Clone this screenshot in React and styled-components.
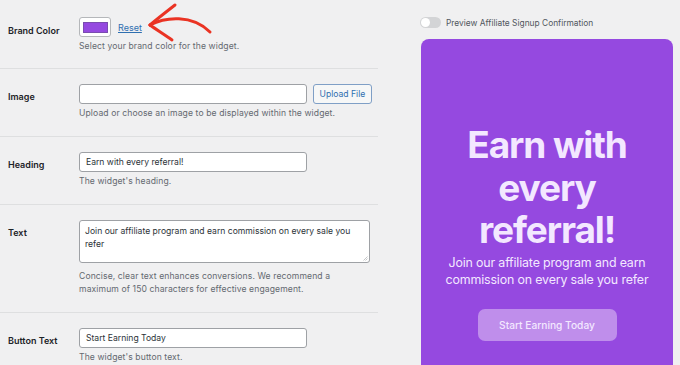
import React from 'react';
import styled, { createGlobalStyle } from 'styled-components';

const Global = createGlobalStyle`
  html, body { margin: 0; padding: 0; background: #f0f0f1; }
  body { font-family: Inter, "Noto Sans", sans-serif; color: #1d2327; }
  * { box-sizing: border-box; }
`;

const Page = styled.div`
  position: relative;
  display: flex;
  width: 680px;
  height: 365px;
  overflow: hidden;
`;

const Settings = styled.div`
  width: 378px;
  flex: none;
`;

const Row = styled.div`
  display: flex;
  padding-top: ${p => (p.first ? 17 : 15)}px;
  padding-bottom: ${p => (p.pb === undefined ? 17 : p.pb)}px;
  border-bottom: ${p => (p.last ? 'none' : '1px solid #dedfe0')};
`;

const Label = styled.div`
  width: 79px;
  flex: none;
  padding: ${p => p.top || 8}px 0 0 8px;
  font-size: 9px;
  line-height: 10px;
  font-weight: 600;
  color: #1d2327;
`;

const Field = styled.div`
  display: flex;
  flex-direction: column;
  min-width: 0;
`;

const Line = styled.div`
  display: flex;
  align-items: center;
  gap: ${p => p.gap || 6}px;
`;

const Swatch = styled.div`
  width: 32px;
  height: 20px;
  border: 1px solid #b5b7ba;
  border-radius: 3px;
  background: #fff;
  display: flex;
  align-items: center;
  justify-content: center;
`;

const SwatchFill = styled.div`
  width: 25px;
  height: 11px;
  background: #9549e0;
  border: 1px solid #7a4cb0;
`;

const Reset = styled.a`
  font-size: 9px;
  color: #2f6fb0;
  text-decoration: underline;
  margin-left: 1px;
`;

const Desc = styled.div`
  margin-top: ${p => p.gap || 4}px;
  font-size: 8.6px;
  line-height: ${p => p.lh || 11}px;
  color: #646970;
  letter-spacing: 0.1px;
`;

const Input = styled.div`
  width: ${p => p.w || 228}px;
  height: ${p => p.h || 20}px;
  border: 1px solid #9ea1a5;
  border-radius: 3px;
  background: #fff;
  font-size: 8.6px;
  color: #2c3338;
  padding: ${p => (p.area ? '4px 5px' : '0 6px')};
  display: flex;
  align-items: ${p => (p.area ? 'flex-start' : 'center')};
  line-height: 13px;
  position: relative;
`;

const Grip = styled.svg`
  position: absolute;
  right: 1px;
  bottom: 1px;
`;

const UploadButton = styled.div`
  height: 20px;
  padding: 0 5.5px;
  border: 1px solid #7f9fc6;
  border-radius: 3px;
  background: #f6f7f7;
  color: #2f6fb0;
  font-size: 8.6px;
  display: flex;
  align-items: center;
`;

const Preview = styled.div`
  margin-left: 42px;
  padding-top: 17px;
  width: 253px;
  flex: none;
`;

const ToggleRow = styled.div`
  display: flex;
  align-items: center;
  gap: 5px;
  height: 11px;
  font-size: 8.4px;
  color: #50575e;
`;

const Toggle = styled.div`
  width: 21px;
  height: 11px;
  border-radius: 6px;
  background: #d3d4d6;
  padding: 1px;
  display: flex;
`;

const Knob = styled.div`
  width: 9px;
  height: 9px;
  border-radius: 50%;
  background: #fff;
`;

const Card = styled.div`
  margin-top: 11px;
  margin-left: 1px;
  width: 252px;
  height: 340px;
  border-radius: 8px;
  background: #9549e0;
  display: flex;
  flex-direction: column;
  align-items: center;
  padding-top: 85px;
  color: #f3e8ff;
  text-align: center;
`;

const Heading = styled.div`
  font-size: 37px;
  font-weight: 700;
  line-height: 42.5px;
  letter-spacing: -1.1px;
  width: 200px;
`;

const Text = styled.div`
  margin-top: 2px;
  font-size: 12.4px;
  line-height: 17.5px;
  letter-spacing: -0.15px;
  width: 230px;
`;

const CTA = styled.div`
  margin-top: 20px;
  width: 139px;
  height: 32px;
  border-radius: 7px;
  background: #bf8eeb;
  font-size: 10.2px;
  font-weight: 500;
  display: flex;
  align-items: center;
  justify-content: center;
`;

const Arrow = styled.svg`
  position: absolute;
  left: 0;
  top: 0;
  pointer-events: none;
`;

export default function App() {
  return (
    <Page>
      <Global />
      <Settings>
        <Row first pb={16}>
          <Label top={9}>Brand Color</Label>
          <Field>
            <Line>
              <Swatch><SwatchFill /></Swatch>
              <Reset>Reset</Reset>
            </Line>
            <Desc>Select your brand color for the widget.</Desc>
          </Field>
        </Row>
        <Row>
          <Label>Image</Label>
          <Field>
            <Line>
              <Input />
              <UploadButton>Upload File</UploadButton>
            </Line>
            <Desc>Upload or choose an image to be displayed within the widget.</Desc>
          </Field>
        </Row>
        <Row>
          <Label>Heading</Label>
          <Field>
            <Input>Earn with every referral!</Input>
            <Desc>The widget's heading.</Desc>
          </Field>
        </Row>
        <Row pb={16}>
          <Label>Text</Label>
          <Field>
            <Input area w={291} h={43}>
              Join our affiliate program and earn commission on every sale you refer
              <Grip width="5" height="5" viewBox="0 0 5 5">
                <path d="M4.5 0.5 L0.5 4.5 M4.5 2.5 L2.5 4.5" stroke="#9ea1a5" strokeWidth="0.6" />
              </Grip>
            </Input>
            <Desc gap={7} lh={13}>
              Concise, clear text enhances conversions. We recommend a<br />
              maximum of 150 characters for effective engagement.
            </Desc>
          </Field>
        </Row>
        <Row last pb={0}>
          <Label>Button Text</Label>
          <Field>
            <Input>Start Earning Today</Input>
            <Desc>The widget's button text.</Desc>
          </Field>
        </Row>
      </Settings>
      <Preview>
        <ToggleRow>
          <Toggle><Knob /></Toggle>
          Preview Affiliate Signup Confirmation
        </ToggleRow>
        <Card>
          <Heading>Earn with every referral!</Heading>
          <Text>Join our affiliate program and earn commission on every sale you refer</Text>
          <CTA>Start Earning Today</CTA>
        </Card>
      </Preview>
      <Arrow width="680" height="365" viewBox="0 0 680 365">
        <g fill="none" stroke="#ea3323" strokeWidth="3" strokeLinecap="round" strokeLinejoin="round">
          <path d="M150 25 C 165 17, 192 14, 210 32" />
          <path d="M175 5 C 166 12, 157 19, 150 25" />
          <path d="M150 25 C 157 30, 165 35, 172 40" />
        </g>
      </Arrow>
    </Page>
  );
}
